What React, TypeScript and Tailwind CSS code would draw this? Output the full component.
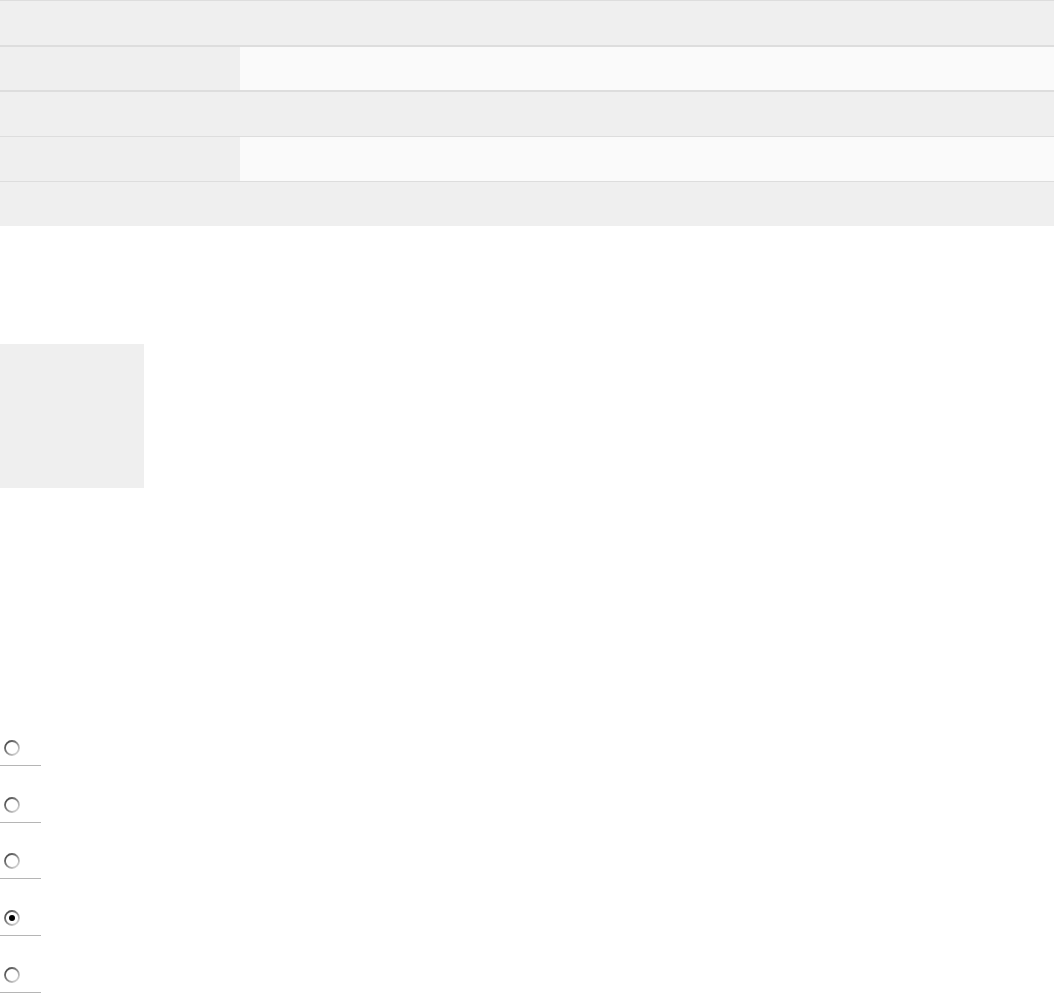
import React from "react";

function Radio({ checked }: { checked?: boolean }) {
  return (
    <svg width="18" height="18" viewBox="0 0 18 18" className="block">
      <defs>
        <linearGradient id="rg" x1="0" y1="0" x2="1" y2="1">
          <stop offset="0" stopColor="#3a3a3a" />
          <stop offset="0.5" stopColor="#8a8a8a" />
          <stop offset="1" stopColor="#ececec" />
        </linearGradient>
      </defs>
      <circle cx="9" cy="9" r="7" fill="#fff" stroke="url(#rg)" strokeWidth="1.8" />
      {checked && <circle cx="9" cy="9" r="3" fill="#000" />}
    </svg>
  );
}

const options = [false, false, false, true, false];

export default function App() {
  return (
    <div className="min-h-[993px] bg-white font-['Liberation_Sans',sans-serif]">
      <div className="border-t border-[#dddddd]">
        <div className="h-[46px] bg-[#efefef] border-b-2 border-[#dddddd]" />
        <div className="grid h-[45px] grid-cols-[240px_1fr] border-b-2 border-[#dddddd]">
          <div className="bg-[#efefef]" />
          <div className="bg-[#fafafa]" />
        </div>
        <div className="h-[45px] bg-[#efefef] border-b border-[#dddddd]" />
        <div className="grid h-[45px] grid-cols-[240px_1fr] border-b border-[#dddddd]">
          <div className="bg-[#efefef]" />
          <div className="bg-[#fafafa]" />
        </div>
        <div className="h-[44px] bg-[#efefef]" />
      </div>

      <div className="mt-[118px] h-[144px] w-[144px] bg-[#efefef]" />

      <div className="mt-[221px] flex flex-col">
        {options.map((checked, i) => (
          <div
            key={i}
            className="flex h-[56.75px] w-[41px] items-end border-b border-[#b5b5b5] pb-[8px] pl-[3px]"
          >
            <Radio checked={checked} />
          </div>
        ))}
      </div>
    </div>
  );
}
